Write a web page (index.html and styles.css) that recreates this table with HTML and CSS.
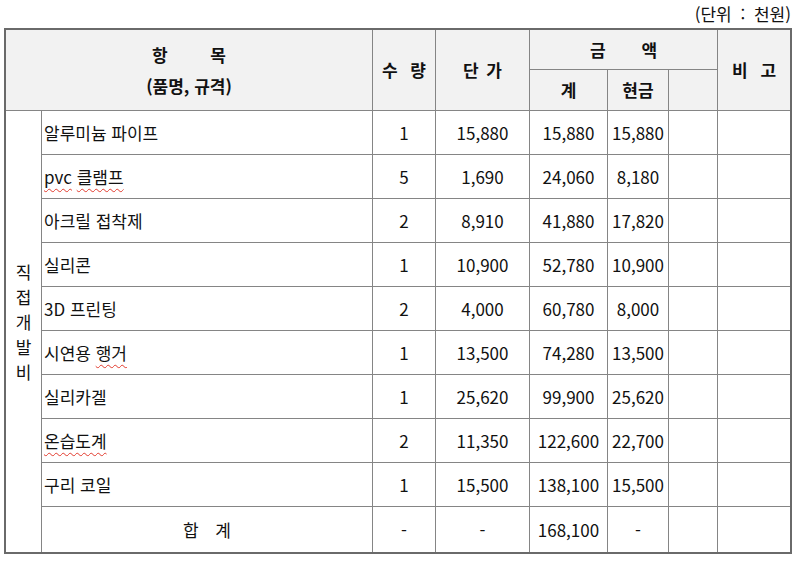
FILE: index.html
```html
<!DOCTYPE html>
<html lang="ko">
<head>
<meta charset="utf-8">
<title>직접개발비</title>
<link rel="stylesheet" href="styles.css">
</head>
<body>
<div class="unit">(단위 : 천원)</div>
<table class="cost">
  <colgroup>
    <col class="c-cat">
    <col class="c-name">
    <col class="c-qty">
    <col class="c-price">
    <col class="c-sum">
    <col class="c-cash">
    <col class="c-empty">
    <col class="c-note">
  </colgroup>
  <thead>
    <tr class="hr1">
      <th colspan="2" rowspan="2" class="h-item"><div>항 목</div><div>(품명, 규격)</div></th>
      <th rowspan="2" class="h-qty">수 량</th>
      <th rowspan="2" class="h-price">단 가</th>
      <th colspan="3" class="h-amount">금 액</th>
      <th rowspan="2" class="h-note last-col">비 고</th>
    </tr>
    <tr class="hr2">
      <th>계</th>
      <th>현금</th>
      <th></th>
    </tr>
  </thead>
  <tbody>
    <tr>
      <td rowspan="10" class="cat last-row"><span>직</span><span>접</span><span>개</span><span>발</span><span>비</span></td>
      <td class="name">알루미늄 파이프</td><td>1</td><td>15,880</td><td>15,880</td><td>15,880</td><td></td><td class="last-col"></td>
    </tr>
    <tr>
      <td class="name"><span class="spell">pvc</span> <span class="spell">클램프</span></td><td>5</td><td>1,690</td><td>24,060</td><td>8,180</td><td></td><td class="last-col"></td>
    </tr>
    <tr>
      <td class="name">아크릴 접착제</td><td>2</td><td>8,910</td><td>41,880</td><td>17,820</td><td></td><td class="last-col"></td>
    </tr>
    <tr>
      <td class="name">실리콘</td><td>1</td><td>10,900</td><td>52,780</td><td>10,900</td><td></td><td class="last-col"></td>
    </tr>
    <tr>
      <td class="name">3D 프린팅</td><td>2</td><td>4,000</td><td>60,780</td><td>8,000</td><td></td><td class="last-col"></td>
    </tr>
    <tr>
      <td class="name">시연용 <span class="spell">행거</span></td><td>1</td><td>13,500</td><td>74,280</td><td>13,500</td><td></td><td class="last-col"></td>
    </tr>
    <tr>
      <td class="name">실리카겔</td><td>1</td><td>25,620</td><td>99,900</td><td>25,620</td><td></td><td class="last-col"></td>
    </tr>
    <tr>
      <td class="name"><span class="spell">온습도계</span></td><td>2</td><td>11,350</td><td>122,600</td><td>22,700</td><td></td><td class="last-col"></td>
    </tr>
    <tr>
      <td class="name">구리 코일</td><td>1</td><td>15,500</td><td>138,100</td><td>15,500</td><td></td><td class="last-col"></td>
    </tr>
    <tr class="total">
      <td class="total-label last-row">합 계</td><td class="last-row">-</td><td class="last-row">-</td><td class="last-row">168,100</td><td class="last-row">-</td><td class="last-row"></td><td class="last-row last-col"></td>
    </tr>
  </tbody>
</table>
</body>
</html>
```

FILE: styles.css
```css
html, body {
  margin: 0;
  padding: 0;
  background: #ffffff;
}

body {
  font-family: "Noto Sans CJK KR", "Noto Sans", sans-serif;
  font-size: 17px;
  color: #111;
}

.unit {
  height: 28px;
  line-height: 28px;
  text-align: right;
  padding-right: 9px;
  font-size: 17px;
  word-spacing: 4px;
}

.cost {
  margin-left: 4px;
  border: 2px solid #6a6a6a;
  border-collapse: separate;
  border-spacing: 0;
  table-layout: fixed;
  width: 788px;
}

.c-cat { width: 36px; }
.c-name { width: 331px; }
.c-qty { width: 63px; }
.c-price { width: 94px; }
.c-sum { width: 78px; }
.c-cash { width: 61px; }
.c-empty { width: 49px; }
.c-note { width: 72px; }

.cost th,
.cost td {
  box-sizing: border-box;
  border-right: 1px solid #858585;
  border-bottom: 1px solid #858585;
  padding: 0;
  text-align: center;
  vertical-align: middle;
  font-weight: normal;
  line-height: 22px;
  white-space: nowrap;
}

.cost .last-col { border-right: none; }
.cost .last-row { border-bottom: none; }

.cost thead th {
  background: #f2f2f2;
  font-weight: bold;
}

.hr1 { height: 40px; }
.hr2 { height: 41px; }

.h-item { line-height: 31px; }
.h-item div { line-height: 31px; }
.h-item div:first-child { word-spacing: 38px; }
.h-qty { word-spacing: 8px; }
.h-price { word-spacing: 3px; }
.h-amount { word-spacing: 31px; }
.h-note { word-spacing: 8px; }

.cost tbody tr { height: 44px; }
.cost tbody tr.total { height: 45px; }

.cost td.name {
  text-align: left;
  padding-left: 2px;
}

.cost td.cat {
  padding-bottom: 20px;
}

.cat span {
  display: block;
  line-height: 25px;
}

.total-label {
  word-spacing: 12px;
  padding-left: 6px;
}

.spell {
  text-decoration: underline wavy #e23b2e;
  text-decoration-thickness: 1px;
  text-underline-offset: 4px;
  text-decoration-skip-ink: none;
}
```
